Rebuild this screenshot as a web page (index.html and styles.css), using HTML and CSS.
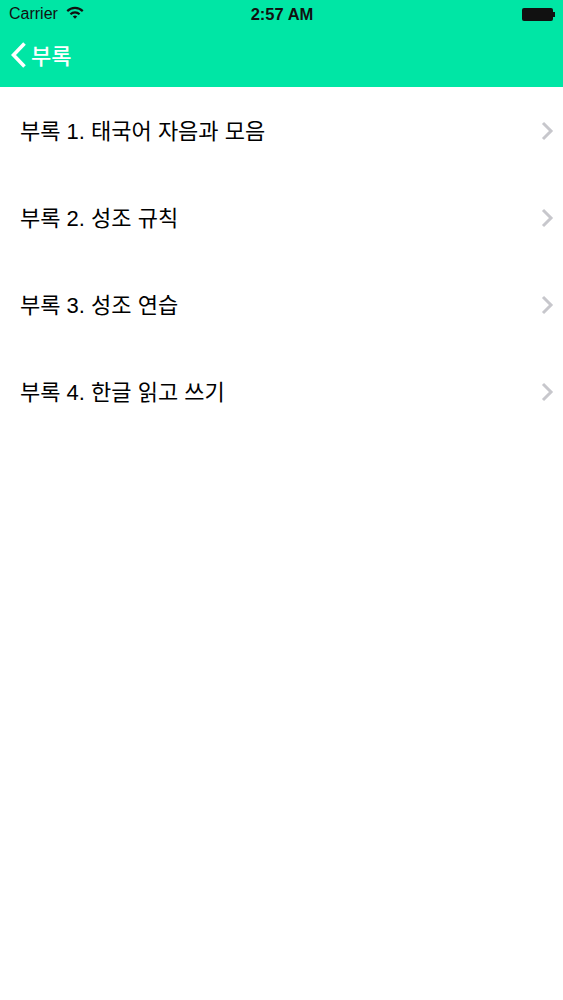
FILE: index.html
```html
<!DOCTYPE html>
<html lang="ko">
<head>
  <meta charset="UTF-8" />
  <meta name="viewport" content="width=device-width, initial-scale=1.0"/>
  <title>부록</title>
  <link rel="stylesheet" href="styles.css">
</head>
<body>
  <header class="top-bar">
    <div class="status-bar">
      <div class="status-left">
        <span>Carrier</span>
        <svg class="wifi" viewBox="0 0 18 13" width="18" height="13">
          <path d="M0.500 4.300a12 12 0 0 1 17 0l-1.500 1.600a9.800 9.800 0 0 0-14 0z" fill="#111"/>
          <path d="M3.700 7.500a7.500 7.500 0 0 1 10.600 0l-1.500 1.600a5.400 5.400 0 0 0-7.600 0z" fill="#111"/>
          <path d="M6.800 10.500a3.100 3.100 0 0 1 4.400 0L9 12.800z" fill="#111"/>
        </svg>
      </div>
      <div class="status-time">2:57 AM</div>
      <div class="battery">
        <div class="battery-body"></div>
        <div class="battery-tip"></div>
      </div>
    </div>
    <div class="nav-bar">
      <svg class="back-icon" viewBox="0 0 17 28" width="17" height="28">
        <path d="M14.500 2.500 3.500 14l11 11.500" fill="none" stroke="#fff" stroke-width="3.600"/>
      </svg>
      <span class="back-label">부록</span>
    </div>
  </header>

  <ul class="menu-list">
    <li class="menu-row">
      <span class="row-title">부록 1. 태국어 자음과 모음</span>
      <svg class="chevron" viewBox="0 0 13 20" width="13" height="20"><path d="M2 2l8 8-8 8" fill="none" stroke="#c7c7cc" stroke-width="3"/></svg>
    </li>
    <li class="menu-row">
      <span class="row-title">부록 2. 성조 규칙</span>
      <svg class="chevron" viewBox="0 0 13 20" width="13" height="20"><path d="M2 2l8 8-8 8" fill="none" stroke="#c7c7cc" stroke-width="3"/></svg>
    </li>
    <li class="menu-row">
      <span class="row-title">부록 3. 성조 연습</span>
      <svg class="chevron" viewBox="0 0 13 20" width="13" height="20"><path d="M2 2l8 8-8 8" fill="none" stroke="#c7c7cc" stroke-width="3"/></svg>
    </li>
    <li class="menu-row">
      <span class="row-title">부록 4. 한글 읽고 쓰기</span>
      <svg class="chevron" viewBox="0 0 13 20" width="13" height="20"><path d="M2 2l8 8-8 8" fill="none" stroke="#c7c7cc" stroke-width="3"/></svg>
    </li>
  </ul>
</body>
</html>
```

FILE: styles.css
```css
* {
  box-sizing: border-box;
}

body {
  margin: 0;
  background: #ffffff;
  color: #000;
  font-family: "Liberation Sans", "Noto Sans CJK KR", sans-serif;
}

.top-bar {
  height: 87px;
  background: #00e6a5;
}

.status-bar {
  height: 28px;
  padding: 0 8px 0 9px;
  display: grid;
  grid-template-columns: 1fr auto 1fr;
  align-items: center;
  font-size: 16px;
  color: #111;
}

.status-left {
  display: flex;
  align-items: center;
  gap: 8px;
}

.wifi {
  margin-top: -4px;
}

.status-time {
  font-size: 16.500px;
  font-weight: bold;
}

.battery {
  display: flex;
  align-items: center;
  justify-content: flex-end;
}

.battery-body {
  width: 31px;
  height: 13px;
  background: #111;
  border-radius: 2px;
}

.battery-tip {
  width: 2px;
  height: 5px;
  background: #111;
}

.nav-bar {
  height: 54px;
  padding-left: 10px;
  display: flex;
  align-items: center;
  gap: 4px;
  color: #fff;
}

.back-label {
  padding-bottom: 2px;
  font-size: 22px;
  font-weight: 500;
}

.menu-list {
  list-style: none;
  margin: 0;
  padding: 0;
}

.menu-row {
  height: 87px;
  padding: 0 9px 0 20px;
  display: flex;
  align-items: center;
  justify-content: space-between;
  font-size: 22px;
}

.row-title {
  padding-bottom: 4px;
}
```
